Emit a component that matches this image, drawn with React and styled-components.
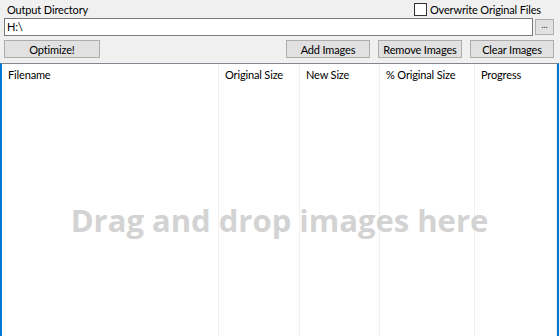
import styled, { createGlobalStyle } from 'styled-components'

const Global = createGlobalStyle`
  html, body { margin: 0; padding: 0; }
  body {
    background: #f0f0f0;
    font-family: Lato, "Noto Sans", sans-serif;
    font-size: 11px;
    letter-spacing: -0.15px;
    color: #000;
  }
`

const columns = [
  { name: 'Filename', width: 217 },
  { name: 'Original Size', width: 81 },
  { name: 'New Size', width: 80 },
  { name: '% Original Size', width: 95 },
  { name: 'Progress', width: null },
]

const App = () => {
  return (
    <Window>
      <Global />
      <TopRow>
        <Label>Output Directory</Label>
        <CheckLabel>
          <Box />
          Overwrite Original Files
        </CheckLabel>
      </TopRow>
      <PathRow>
        <TextBox>H:\</TextBox>
        <BrowseButton>...</BrowseButton>
      </PathRow>
      <ButtonRow>
        <Button $w={96}>Optimize!</Button>
        <Spacer />
        <Button $w={84}>Add Images</Button>
        <Button $w={84}>Remove Images</Button>
        <Button $w={84}>Clear Images</Button>
      </ButtonRow>
      <ListView>
        {columns.map((c) => (
          <Column key={c.name} $w={c.width}>
            <Header>{c.name}</Header>
          </Column>
        ))}
        <DropHint>Drag and drop images here</DropHint>
      </ListView>
    </Window>
  )
}

export default App

const Window = styled.div`
  width: 560px;
  height: 336px;
  display: flex;
  flex-direction: column;
  overflow: hidden;
`
const TopRow = styled.div`
  display: flex;
  justify-content: space-between;
  align-items: center;
  height: 17px;
  padding: 1px 19px 0 7px;
`
const Label = styled.span`
  line-height: 14px;
`
const CheckLabel = styled.label`
  display: flex;
  align-items: center;
  gap: 3px;
  line-height: 14px;
`
const Box = styled.span`
  width: 11px;
  height: 11px;
  border: 1px solid #333;
  background: #fff;
`
const PathRow = styled.div`
  display: flex;
  align-items: center;
  gap: 2px;
  padding: 0 6px 0 4px;
  height: 18px;
`
const TextBox = styled.div`
  flex: 1;
  height: 16px;
  border: 1px solid #7a7a7a;
  background: #fff;
  line-height: 16px;
  padding-left: 2px;
`
const BrowseButton = styled.div`
  width: 17px;
  height: 14px;
  border: 1px solid #adadad;
  background: #e1e1e1;
  font-size: 9px;
  line-height: 10px;
  text-align: center;
  color: #333;
`
const ButtonRow = styled.div`
  display: flex;
  gap: 8px;
  padding: 4px 6px 0 4px;
  height: 18px;
`
const Spacer = styled.div`
  flex: 1;
`
const Button = styled.div`
  width: ${(p) => p.$w}px;
  box-sizing: border-box;
  height: 18px;
  border: 1px solid #adadad;
  background: #e1e1e1;
  display: flex;
  align-items: center;
  justify-content: center;
  white-space: nowrap;
`
const ListView = styled.div`
  position: relative;
  flex: 1;
  margin-top: 5px;
  display: flex;
  background: #fff;
  border-top: 1px solid #828790;
  border-left: 2px solid #0078d7;
  border-right: 2px solid #0078d7;
  margin-right: 1px;
`
const Column = styled.div`
  ${(p) => (p.$w ? `width: ${p.$w}px;` : 'flex: 1;')}
  flex-shrink: 0;
  box-sizing: border-box;
  border-right: 1px solid #f0f0f0;
  &:last-of-type { border-right: none; }
`
const Header = styled.div`
  height: 20px;
  line-height: 20px;
  padding: 1px 0 0 6px;
  color: #000;
  white-space: nowrap;
`
const DropHint = styled.div`
  position: absolute;
  left: 0;
  right: 0;
  top: 136px;
  text-align: center;
  font-family: "Open Sans", sans-serif;
  font-weight: 700;
  font-size: 31px;
  letter-spacing: 0;
  line-height: 40px;
  color: #d3d3d3;
  pointer-events: none;
`
